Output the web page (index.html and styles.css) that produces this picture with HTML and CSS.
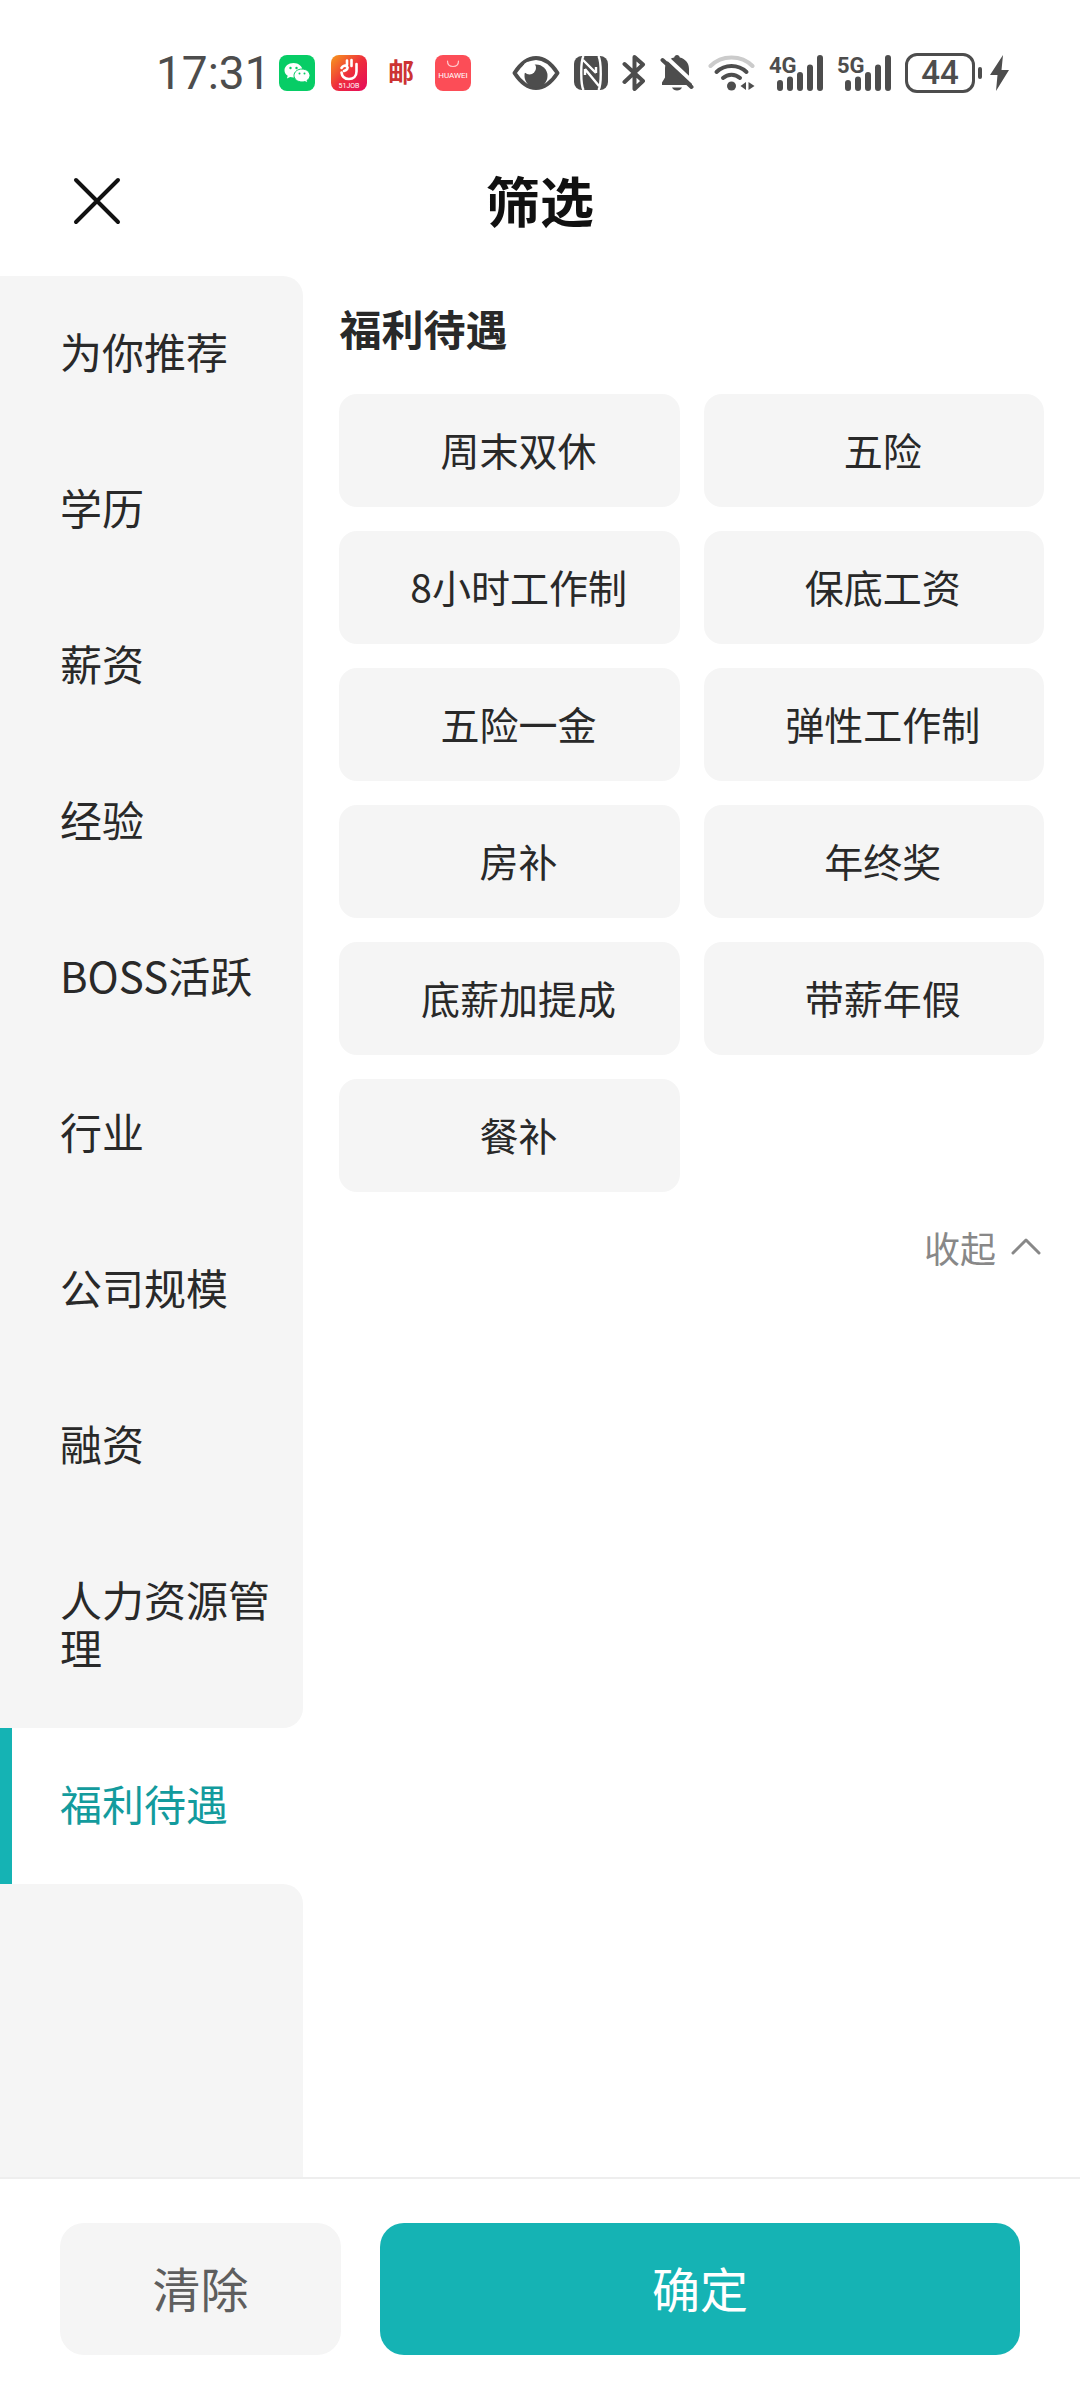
FILE: index.html
```
<!DOCTYPE html>
<html lang="zh-CN">
<head>
    <meta charset="UTF-8">
    <meta name="viewport" content="width=device-width, initial-scale=1.0">
    <title>筛选</title>
    <link rel="stylesheet" href="styles.css">
</head>
<body>
    <div class="status-bar">
        <span class="clock">17:31</span>
        <div class="app-icons">
            <svg width="36" height="36" viewBox="0 0 36 36">
                <rect width="36" height="36" rx="8" fill="#07cd66"/>
                <path d="M14.500 8c-5 0-9 3.200-9 7.300 0 2.300 1.200 4.200 3.200 5.500l-.8 2.700 3.200-1.600c1.100.3 2.200.5 3.400.5 5 0 9-3.100 9-7.100S19.500 8 14.500 8z" fill="#fff"/>
                <path d="M23 14c-4.400 0-8 2.900-8 6.500s3.600 6.500 8 6.500c1 0 2-.1 2.900-.4l2.800 1.400-.7-2.500c1.800-1.200 3-3 3-5 0-3.600-3.600-6.500-8-6.500z" fill="#fff" stroke="#07cd66"/>
                <g fill="#07cd66"><circle cx="11.500" cy="13" r="1.200"/><circle cx="17.500" cy="13" r="1.200"/><circle cx="20.500" cy="18.500" r="1"/><circle cx="25.500" cy="18.500" r="1"/></g>
            </svg>
            <svg width="36" height="36" viewBox="0 0 36 36">
                <defs>
                    <linearGradient id="job" x1="0" y1="0" x2="1" y2="1">
                        <stop offset="0" stop-color="#f79a1c"/>
                        <stop offset=".5" stop-color="#ee2e3c"/>
                        <stop offset="1" stop-color="#e5095c"/>
                    </linearGradient>
                </defs>
                <rect width="36" height="36" rx="8" fill="url(#job)"/>
                <path d="M10.500 17.500c.5 4 3.200 6.500 7.500 6.500s7.500-2.500 7.500-7.500V9M16 10V5.500M20.500 11V5M10.500 13c1.500-2.500 4-3 5.500-1.500s0 3.500-3 4.500" fill="none" stroke="#fff" stroke-width="2.600" stroke-linecap="round"/>
                <text x="18" y="33" class="job-text">51JOB</text>
            </svg>
            <svg width="36" height="36" viewBox="0 0 36 36">
                <text x="18" y="27" class="mail-text">邮</text>
            </svg>
            <svg width="36" height="36" viewBox="0 0 36 36">
                <rect width="36" height="36" rx="8" fill="#fc4d57"/>
                <path d="M12.500 6c0 3.500 2.200 5.500 5.500 5.500s5.500-2 5.500-5.500" fill="none" stroke="#ffc9cc" stroke-width="1.200" stroke-linecap="round"/>
                <text x="18" y="23" class="huawei-text">HUAWEI</text>
            </svg>
        </div>
        <div class="system-icons">
            <!-- eye comfort -->
            <svg width="48" height="36" viewBox="0 0 48 36">
                <path d="M2.500 18C9 8 16 3 24 3s15 5 21.500 15C39 28 32 33 24 33S9 28 2.500 18z" fill="none" stroke="#4d4d4d" stroke-width="4" stroke-linejoin="round"/>
                <circle cx="24" cy="21" r="11.500" fill="#4d4d4d"/>
                <circle cx="17.500" cy="13" r="6.500" fill="#fff"/>
            </svg>
            <!-- nfc -->
            <svg width="34" height="36" viewBox="0 0 34 36">
                <rect y="1" width="34" height="34" rx="8" fill="#4d4d4d"/>
                <path d="M9.500 1C6.500 6 6.500 29 9.500 35M24.500 1c3 6 3 29 0 34M9 5l13 13M11 14l14 17M22 18V12M11 14v6" fill="none" stroke="#fff" stroke-width="2.400"/>
            </svg>
            <!-- bluetooth -->
            <svg width="24" height="36" viewBox="0 0 24 36">
                <path d="M2.500 9L21 26l-8.500 8V2L21 9.500 2.500 27" fill="none" stroke="#4d4d4d" stroke-width="4" stroke-linecap="round" stroke-linejoin="round"/>
            </svg>
            <!-- muted bell -->
            <svg width="34" height="36" viewBox="0 0 34 36">
                <path d="M17 0c1.500 0 2.500 1 2.800 2.500 5.500 1.300 9.200 5.500 9.200 11.500v8.500l3 6V30H2v-2.500l3-5V14C5 8 8.500 3.800 14.200 2.500 14.500 1 15.500 0 17 0z" fill="#4d4d4d"/>
                <path d="M12 32.500h10c-1 2-2.500 3-5 3s-4-1-5-3z" fill="#4d4d4d"/>
                <path d="M4 0l32 30" stroke="#fff" stroke-width="4"/>
                <path d="M2.500 5L31.500 32" stroke="#4d4d4d" stroke-width="4" stroke-linecap="round"/>
            </svg>
            <!-- wifi -->
            <svg width="47" height="36" viewBox="0 0 47 36">
                <g fill="none" stroke="#4d4d4d" stroke-width="4" stroke-linecap="round">
                    <path d="M2.500 11c11-11.500 31-11.500 42 0" stroke="#cbcbcb"/>
                    <path d="M8.500 17c8.500-8 21.500-8 30 0"/>
                    <path d="M15 23c5-4.500 12-4.500 17 0"/>
                </g>
                <circle cx="23.500" cy="31" r="4.500" fill="#4d4d4d"/>
                <path d="M38 27v8l-5.500-4zM40.500 27v8l6-4z" fill="#4d4d4d"/>
            </svg>
            <!-- sim 1 -->
            <svg class="signal" width="54" height="36" viewBox="0 0 54 36">
                <text x="0" y="18" class="net-text">4G</text>
                <path d="M11 28v5M21 24.500V33M31 20v13M41 12.500V33M51 3v30" stroke="#4d4d4d" stroke-width="6" stroke-linecap="round"/>
            </svg>
            <!-- sim 2 -->
            <svg class="signal" width="54" height="36" viewBox="0 0 54 36">
                <text x="0" y="18" class="net-text">5G</text>
                <path d="M11 28v5M21 24.500V33M31 20v13M41 12.500V33M51 3v30" stroke="#4d4d4d" stroke-width="6" stroke-linecap="round"/>
            </svg>
            <div class="battery">
                <span class="battery-level">44</span>
                <span class="battery-tip"></span>
                <svg width="19" height="38" viewBox="0 0 19 38"><path d="M13 1L0 21h7.500L6 37 19 16h-7.500z" fill="#4d4d4d"/></svg>
            </div>
        </div>
    </div>

    <header class="header">
        <button class="close-btn" aria-label="关闭">
            <svg width="48" height="48" viewBox="0 0 48 48">
                <path d="M3 3l42 42M45 3L3 45" stroke="#111" stroke-width="4" stroke-linecap="round"/>
            </svg>
        </button>
        <h1>筛选</h1>
    </header>

    <main class="content">
        <nav class="sidebar">
            <button class="side-item first">为你推荐</button>
            <button class="side-item">学历</button>
            <button class="side-item">薪资</button>
            <button class="side-item">经验</button>
            <button class="side-item">BOSS活跃</button>
            <button class="side-item">行业</button>
            <button class="side-item">公司规模</button>
            <button class="side-item">融资</button>
            <button class="side-item before-active">人力资源管理</button>
            <button class="side-item active">福利待遇</button>
            <div class="side-rest"></div>
        </nav>

        <section class="panel">
            <h2>福利待遇</h2>
            <div class="chips">
                <button class="chip">周末双休</button>
                <button class="chip">五险</button>
                <button class="chip">8小时工作制</button>
                <button class="chip">保底工资</button>
                <button class="chip">五险一金</button>
                <button class="chip">弹性工作制</button>
                <button class="chip">房补</button>
                <button class="chip">年终奖</button>
                <button class="chip">底薪加提成</button>
                <button class="chip">带薪年假</button>
                <button class="chip">餐补</button>
            </div>
            <button class="collapse-btn">
                收起
                <svg width="32" height="20" viewBox="0 0 32 20">
                    <path d="M3 16L16 3l13 13" fill="none" stroke="#888" stroke-width="3" stroke-linecap="round" stroke-linejoin="round"/>
                </svg>
            </button>
        </section>
    </main>

    <footer class="footer">
        <button class="btn btn-clear">清除</button>
        <button class="btn btn-confirm">确定</button>
    </footer>
</body>
</html>
```
FILE: styles.css
```
:root {
    --teal: #15b3b4;
    --teal-text: #139b9d;
    --grey: #f5f5f5;
    --text: #292929;
    --status: #4d4d4d;
}

* {
    box-sizing: border-box;
}

body {
    margin: 0;
    min-height: 100vh;
    display: flex;
    flex-direction: column;
    background: #fff;
    color: var(--text);
    font-family: "Noto Sans CJK SC", sans-serif;
}

button {
    margin: 0;
    padding: 0;
    border: none;
    background: none;
    color: inherit;
    font: inherit;
    cursor: pointer;
}

svg {
    display: block;
    flex-shrink: 0;
}

/* STATUS BAR */
.status-bar {
    display: flex;
    align-items: center;
    height: 126px;
    padding: 20px 71px 0 156px;
    color: var(--status);
    font-family: Roboto, "Noto Sans CJK SC", sans-serif;
}

.clock {
    width: 123px;
    font-size: 46px;
    line-height: 60px;
}

.app-icons {
    display: flex;
    gap: 16px;
}

.system-icons {
    display: flex;
    align-items: center;
    gap: 14px;
    margin-left: auto;
}

.job-text,
.huawei-text {
    font-size: 8px;
    fill: #fff;
    text-anchor: middle;
}

.job-text {
    font-size: 7px;
}

.mail-text {
    font-size: 26px;
    font-weight: bold;
    fill: #cc3333;
    text-anchor: middle;
}

.signal {
    overflow: visible;
}

.net-text {
    font-size: 22px;
    font-weight: bold;
    fill: var(--status);
}

.battery {
    display: flex;
    align-items: center;
}

.battery-level {
    width: 70px;
    height: 40px;
    border: 3px solid var(--status);
    border-radius: 12px;
    font-size: 33px;
    font-weight: 500;
    line-height: 34px;
    text-align: center;
}

.battery-tip {
    width: 4px;
    height: 12px;
    margin: 0 8px 0 3px;
    border-radius: 2px;
    background: var(--status);
}

/* HEADER */
.header {
    display: grid;
    grid-template-columns: 48px 1fr 48px;
    align-items: center;
    height: 150px;
    padding: 0 73px;
}

.close-btn {
    height: 48px;
}

.header h1 {
    margin: 0;
    padding-bottom: 2px;
    font-size: 54px;
    font-weight: bold;
    line-height: 64px;
    text-align: center;
    color: #111;
}

/* CONTENT */
.content {
    flex: 1;
    display: flex;
}

.sidebar {
    flex: 0 0 28.1%;
    display: flex;
    flex-direction: column;
}

.side-item {
    padding: 51px 24px 57px 60px;
    background: var(--grey);
    font-size: 42px;
    line-height: 48px;
    text-align: left;
}

.side-item.first {
    border-top-right-radius: 20px;
}

.side-item.before-active {
    border-bottom-right-radius: 20px;
}

.side-item.active {
    padding-left: 48px;
    border-left: 12px solid var(--teal);
    background: #fff;
    color: var(--teal-text);
}

.side-rest {
    flex: 1;
    background: var(--grey);
    border-top-right-radius: 20px;
}

.panel {
    flex: 1;
    padding: 22px 36px;
}

.panel h2 {
    margin: 0 0 36px;
    font-size: 42px;
    font-weight: bold;
    line-height: 60px;
}

.chips {
    display: grid;
    grid-template-columns: 1fr 1fr;
    gap: 24px;
}

.chip {
    height: 113px;
    padding: 0 0 4px 18px;
    border-radius: 18px;
    background: var(--grey);
    font-size: 39px;
}

.collapse-btn {
    display: flex;
    align-items: center;
    gap: 14px;
    margin: 31px 2px 0 auto;
    font-size: 36px;
    line-height: 48px;
    color: #888;
}

/* FOOTER */
.footer {
    display: flex;
    gap: 39px;
    padding: 44px 60px 45px;
    border-top: 2px solid #eee;
}

.btn {
    height: 132px;
    padding-bottom: 5px;
    border-radius: 24px;
    font-size: 48px;
}

.btn-clear {
    flex: 281;
    background: var(--grey);
    color: #5e5e5e;
}

.btn-confirm {
    flex: 640;
    background: var(--teal);
    color: #fff;
}
```
